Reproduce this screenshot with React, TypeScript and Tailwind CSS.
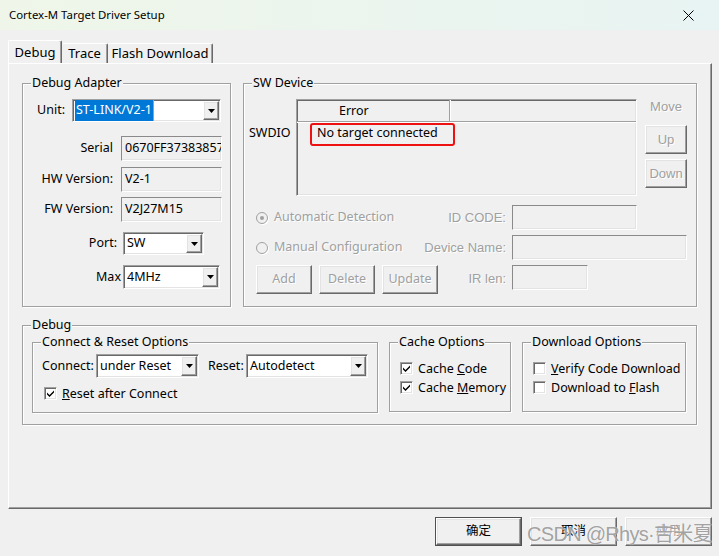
const sunken =
  'border border-t-[#a0a0a0] border-l-[#a0a0a0] border-r-white border-b-white shadow-[inset_1px_1px_0_#696969,inset_-1px_-1px_0_#e3e3e3]'
const raised =
  'border border-t-white border-l-white border-r-[#696969] border-b-[#696969] shadow-[inset_-1px_-1px_0_#a0a0a0,inset_1px_1px_0_#e3e3e3]'
const dis = 'text-[#a0a0a0] [text-shadow:1px_1px_0_#fff]'
const oldFont = "font-['Liberation_Sans',sans-serif] text-[13px]"

const GroupBox = ({ title, className, children }) => (
  <div
    className={`relative border border-[#a0a0a0] shadow-[inset_1px_1px_0_#fff,1px_1px_0_#fff] ${className}`}
  >
    <span className="absolute left-[8px] -top-[10px] bg-[#f0f0f0] px-[1px] leading-[18px]">
      {title}
    </span>
    {children}
  </div>
)

const Arrow = () => (
  <svg width="7" height="4" viewBox="0 0 7 4">
    <path d="M0 0h7L3.5 4z" fill="#000" />
  </svg>
)

const Select = ({ value, className, highlight = false }) => (
  <div className={`flex bg-white ${sunken} ${className}`}>
    <div className="flex flex-1 items-center overflow-hidden whitespace-nowrap pl-[2px]">
      {highlight ? (
        <>
          <span className="flex h-full items-center bg-[#0078d7] px-[1px] text-white">
            {value}
          </span>
          <span className="h-full w-[1px] bg-[#ff8c00]" />
        </>
      ) : (
        <span className="pl-[1px]">{value}</span>
      )}
    </div>
    <div
      className={`m-[1px] flex w-[16px] items-center justify-center bg-[#f0f0f0] ${raised}`}
    >
      <Arrow />
    </div>
  </div>
)

const Field = ({ value = '', className }) => (
  <div
    className={`flex items-center overflow-hidden whitespace-nowrap bg-[#f0f0f0] pl-[3px] border border-t-[#8a8a8a] border-l-[#8a8a8a] border-r-white border-b-white shadow-[inset_-1px_-1px_0_#e3e3e3] ${className}`}
  >
    {value}
  </div>
)

const Button = ({ label, className, disabled = false }) => (
  <div
    className={`flex items-center justify-center bg-[#f0f0f0] ${raised} ${disabled ? `${dis} ${oldFont}` : ''} ${className}`}
  >
    {label}
  </div>
)

const Check = ({ checked = false }) => (
  <div
    className={`flex h-[13px] w-[13px] shrink-0 items-center justify-center bg-white ${sunken}`}
  >
    {checked && (
      <svg width="7" height="7" viewBox="0 0 7 7">
        <path d="M0 2.5l2.5 2.5 4.5-4.5v2l-4.5 4.5-2.5-2.5z" fill="#000" />
      </svg>
    )}
  </div>
)

const Radio = ({ checked = false }) => (
  <div className="flex h-[12px] w-[12px] shrink-0 items-center justify-center rounded-full border border-[#a0a0a0] bg-[#f0f0f0] shadow-[1px_1px_0_#fff]">
    {checked && <div className="h-[4px] w-[4px] rounded-full bg-[#a0a0a0]" />}
  </div>
)

const CheckRow = ({ checked, children, className }) => (
  <div className={`flex h-[13px] items-center ${className}`}>
    <Check checked={checked} />
    <span className="ml-[5px] leading-[13px] whitespace-nowrap">{children}</span>
  </div>
)

export default function App() {
  return (
    <div className="relative h-[556px] w-[719px] overflow-hidden bg-[#f0f0f0] font-['Noto_Sans','Noto_Sans_CJK_SC',sans-serif] text-[12.5px] text-black">
      {/* title bar */}
      <div className="flex h-[30px] items-center justify-between bg-linear-to-r from-[#eff6e9] to-[#e8f4f3] pl-[9px] pr-[25px]">
        <span className="text-[11.4px]">Cortex-M Target Driver Setup</span>
        <svg width="11" height="11" viewBox="0 0 11 11">
          <path d="M0.5 0.5l10 10M10.5 0.5l-10 10" stroke="#000" strokeWidth="1" />
        </svg>
      </div>

      {/* tabs */}
      <div className="mt-[10px] flex h-[23px] items-end pl-[8px] text-[13px]">
        <div className="flex h-[23px] w-[54px] justify-center rounded-t-[2px] border-l border-t border-r border-white border-r-[#696969] pt-[1px] leading-[20px] shadow-[inset_-1px_0_0_#a0a0a0]">
          Debug
        </div>
        <div className="flex h-[20px] w-[46px] justify-center rounded-t-[2px] border-t border-r border-white border-r-[#696969] leading-[19px] shadow-[inset_-1px_0_0_#a0a0a0]">
          Trace
        </div>
        <div className="flex h-[20px] w-[105px] justify-center rounded-t-[2px] border-t border-r border-white border-r-[#696969] leading-[19px] shadow-[inset_-1px_0_0_#a0a0a0]">
          Flash Download
        </div>
      </div>

      {/* panel */}
      <div className="ml-[8px] h-[446px] w-[704px] border border-white border-r-[#696969] border-b-[#696969] pl-[13px] pt-[19px] shadow-[inset_-1px_-1px_0_#a0a0a0]">
        <div className="flex gap-[12px]">
          <GroupBox title="Debug Adapter" className="h-[224px] w-[209px]">
            <div className="mt-[15px] flex h-[23px] items-center">
              <span className="w-[42px] text-right">Unit:</span>
              <Select value="ST-LINK/V2-1" highlight className="ml-[7px] h-[23px] w-[149px]" />
            </div>
            <div className="mt-[14px] flex items-center">
              <span className="w-[90px] text-right">Serial</span>
              <Field value="0670FF37383857" className="ml-[8px] h-[25px] w-[101px]" />
            </div>
            <div className="mt-[6px] flex items-center">
              <span className="w-[90px] text-right">HW Version:</span>
              <Field value="V2-1" className="ml-[8px] h-[25px] w-[101px]" />
            </div>
            <div className="mt-[5px] flex items-center">
              <span className="w-[90px] text-right">FW Version:</span>
              <Field value="V2J27M15" className="ml-[8px] h-[25px] w-[101px]" />
            </div>
            <div className="mt-[10px] flex items-center">
              <span className="w-[94px] text-right">Port:</span>
              <Select value="SW" className="ml-[6px] h-[23px] w-[81px]" />
            </div>
            <div className="mt-[10px] flex items-center">
              <span className="w-[98px] text-right">Max</span>
              <Select value="4MHz" className="ml-[2px] h-[24px] w-[97px]" />
            </div>
          </GroupBox>

          <GroupBox title="SW Device" className="h-[224px] w-[454px]">
            <div className="mt-[15px] flex items-start">
              <span className="ml-[5px] mt-[25px] w-[47px] leading-[18px]">SWDIO</span>
              <div className={`relative h-[97px] w-[341px] bg-[#f0f0f0] ${sunken}`}>
                <div className="flex h-[22px] border-b border-[#a0a0a0] shadow-[0_1px_0_#fff]">
                  <div className="w-[153px] border-r border-[#a0a0a0] pl-[42px] leading-[21px]">
                    Error
                  </div>
                  <div className="w-[1px] bg-white" />
                </div>
                <div className="mt-[2px] pl-[20px] leading-[18px]">No target connected</div>
                <div className="absolute left-[13px] top-[23px] h-[23px] w-[145px] rounded-[3px] border-2 border-[#ee1111]" />
              </div>
              <div className={`ml-[8px] flex w-[42px] flex-col ${oldFont}`}>
                <div className={`h-[26px] text-center leading-[16px] ${dis}`}>Move</div>
                <Button label="Up" disabled className="h-[29px]" />
                <Button label="Down" disabled className="mt-[5px] h-[29px]" />
              </div>
            </div>

            <div className="mt-[9px] flex items-center pl-[12px]">
              <div className="flex w-[250px] items-center justify-between">
                <div className="flex items-center">
                  <Radio checked />
                  <span className={`ml-[6px] ${dis}`}>Automatic Detection</span>
                </div>
                <span className={`${oldFont} ${dis}`}>ID CODE:</span>
              </div>
              <Field className="ml-[6px] h-[25px] w-[125px]" />
            </div>
            <div className="mt-[5px] flex items-center pl-[12px]">
              <div className="flex w-[250px] items-center justify-between">
                <div className="flex items-center">
                  <Radio />
                  <span className={`ml-[6px] ${dis}`}>Manual Configuration</span>
                </div>
                <span className={`${oldFont} ${dis}`}>Device Name:</span>
              </div>
              <Field className="ml-[6px] h-[25px] w-[175px]" />
            </div>
            <div className="mt-[5px] flex items-start pl-[12px]">
              <div className="flex w-[250px] items-start justify-between">
                <div className="flex gap-[7px]">
                  <Button label="Add" className={`h-[29px] w-[56px] ${dis}`} />
                  <Button label="Delete" className={`h-[29px] w-[56px] ${dis}`} />
                  <Button label="Update" className={`h-[29px] w-[56px] ${dis}`} />
                </div>
                <span className={`mt-[4px] ${oldFont} ${dis}`}>IR len:</span>
              </div>
              <Field className="ml-[6px] h-[25px] w-[76px]" />
            </div>
          </GroupBox>
        </div>

        <GroupBox title="Debug" className="mt-[18px] h-[100px] w-[675px]">
          <div className="mt-[16px] flex items-start pl-[9px]">
            <GroupBox title="Connect & Reset Options" className="h-[71px] w-[346px]">
              <div className="mt-[11px] flex items-center pl-[9px]">
                <span className="w-[54px]">Connect:</span>
                <Select value="under Reset" className="h-[24px] w-[103px]" />
                <span className="ml-[9px] w-[38px]">Reset:</span>
                <Select value="Autodetect" className="h-[24px] w-[122px]" />
              </div>
              <CheckRow checked className="mt-[9px] pl-[11px]">
                <u>R</u>eset after Connect
              </CheckRow>
            </GroupBox>
            <GroupBox title="Cache Options" className="ml-[11px] h-[70px] w-[122px]">
              <CheckRow checked className="mt-[19px] pl-[10px]">
                Cache <u>C</u>ode
              </CheckRow>
              <CheckRow checked className="mt-[6px] pl-[10px]">
                Cache <u>M</u>emory
              </CheckRow>
            </GroupBox>
            <GroupBox title="Download Options" className="ml-[11px] h-[70px] w-[164px]">
              <CheckRow className="mt-[19px] pl-[10px]">
                <u>V</u>erify Code Download
              </CheckRow>
              <CheckRow className="mt-[6px] pl-[10px]">
                Download to <u>F</u>lash
              </CheckRow>
            </GroupBox>
          </div>
        </GroupBox>
      </div>

      {/* dialog buttons */}
      <div className="mt-[8px] flex justify-end gap-[8px] pr-[7px]">
        <div className="h-[29px] w-[87px] border border-[#505050]">
          <Button label="确定" className="h-full w-full" />
        </div>
        <Button label="取消" className="h-[29px] w-[87px]" />
        <Button label="应用" className={`h-[29px] w-[87px] ${dis}`} />
      </div>

      {/* watermark */}
      <div className="absolute left-[527px] top-[522px] font-['Liberation_Sans','Noto_Sans_CJK_SC',sans-serif] text-[20px] leading-[24px] tracking-[-0.7px] whitespace-nowrap text-[#8a8a8a]/80 [text-shadow:0_0_1px_#fff]">
        CSDN @Rhys·吉米夏
      </div>
    </div>
  )
}
